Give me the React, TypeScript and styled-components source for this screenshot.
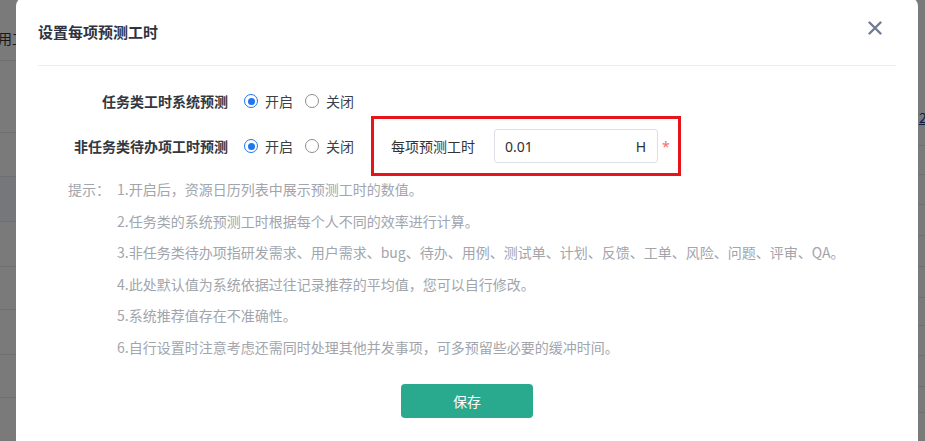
import React from "react";
import styled, { createGlobalStyle } from "styled-components";

const GlobalStyle = createGlobalStyle`
  html, body {
    margin: 0;
    padding: 0;
  }
  body {
    width: 925px;
    height: 441px;
    overflow: hidden;
    font-family: "Noto Sans", "Noto Sans CJK SC", sans-serif;
    font-size: 14px;
    color: #333;
  }
`;

/* page behind the dialog */
const Page = styled.div`
  display: flex;
  justify-content: space-between;
  height: 441px;
  background: #fff;
`;

const SideTable = styled.div<{ $width: number }>`
  display: flex;
  flex-direction: column;
  width: ${(p) => p.$width}px;
  overflow: hidden;
`;

const SideRow = styled.div<{ $height: number; $tint?: boolean }>`
  box-sizing: border-box;
  height: ${(p) => p.$height}px;
  flex-shrink: 0;
  border-bottom: 1px solid #e6e8eb;
  background: ${(p) => (p.$tint ? "#f4f8fe" : "transparent")};
  font-family: "Noto Sans CJK SC", sans-serif;
  font-size: 14px;
  color: #333;
  white-space: nowrap;
`;

const SideText = styled.div`
  margin: 29px 0 0 -2px;
  line-height: 18px;
`;

const LinkText = styled.div`
  margin: 108px 0 0 1px;
  line-height: 18px;
  color: #1d3a8a;
  text-decoration: underline;
`;

/* dialog */
const Mask = styled.div`
  position: fixed;
  inset: 0;
  background: rgba(0, 0, 0, 0.52);
  display: flex;
  align-items: flex-start;
`;

const Dialog = styled.div`
  box-sizing: border-box;
  width: 902px;
  margin: -2px 0 0 16px;
  padding: 0 22px 40px;
  background: #fff;
  border-radius: 8px;
`;

const Header = styled.div`
  box-sizing: border-box;
  display: flex;
  justify-content: space-between;
  height: 68px;
  border-bottom: 1px solid #ebedf0;
`;

const Title = styled.div`
  line-height: 67px;
  font-family: "Noto Sans CJK SC", sans-serif;
  font-size: 15px;
  font-weight: 600;
  color: #2f3340;
`;

const CloseButton = styled.div`
  width: 14px;
  height: 14px;
  margin: 22px 14px 0 0;
  cursor: pointer;
`;

const Body = styled.div`
  padding-top: 20px;
`;

const FormRow = styled.div<{ $height: number }>`
  display: flex;
  align-items: center;
  height: ${(p) => p.$height}px;
`;

const RowLabel = styled.div`
  width: 190px;
  margin-right: 16px;
  text-align: right;
  font-family: "Noto Sans CJK SC", sans-serif;
  font-weight: 600;
  color: #333840;
`;

const RadioGroup = styled.div`
  display: flex;
  align-items: center;
  gap: 12px;
`;

const RadioOption = styled.label`
  display: flex;
  align-items: center;
  gap: 7px;
  color: #3c3f45;
  font-family: "Noto Sans CJK SC", sans-serif;
  cursor: pointer;
`;

const RadioCircle = styled.span<{ $checked: boolean }>`
  box-sizing: border-box;
  display: flex;
  align-items: center;
  justify-content: center;
  width: 14px;
  height: 14px;
  border-radius: 50%;
  border: ${(p) => (p.$checked ? "1.5px solid #1f75f2" : "1px solid #8c8f94")};
  &::after {
    content: "";
    display: ${(p) => (p.$checked ? "block" : "none")};
    width: 7px;
    height: 7px;
    border-radius: 50%;
    background: #1f75f2;
  }
`;

const HighlightBox = styled.div`
  box-sizing: border-box;
  display: flex;
  align-items: center;
  flex-shrink: 0;
  width: 310px;
  height: 60px;
  margin-left: 17px;
  padding: 0 10px 0 17px;
  border: 3px solid #e8141c;
`;

const FieldLabel = styled.div`
  flex-shrink: 0;
  margin-right: 19px;
  white-space: nowrap;
  font-family: "Noto Sans CJK SC", sans-serif;
  color: #333;
`;

const InputBox = styled.div`
  box-sizing: border-box;
  display: flex;
  align-items: center;
  justify-content: space-between;
  flex-shrink: 0;
  width: 164px;
  height: 34px;
  padding: 0 11px 0 10px;
  border: 1px solid #dcdfe6;
  border-radius: 3px;
  color: #303133;
`;

const Required = styled.span`
  margin-left: 4px;
  color: #f56c6c;
  font-size: 14px;
`;

const Hints = styled.div`
  display: flex;
  padding-left: 30px;
  font-family: "Noto Sans CJK SC", sans-serif;
  color: #a2a5ac;
`;

const HintLabel = styled.div`
  width: 49px;
  line-height: 26px;
`;

const HintList = styled.div`
  display: flex;
  flex-direction: column;
  gap: 5.6px;
`;

const HintLine = styled.div`
  line-height: 26px;
  white-space: nowrap;
`;

const Footer = styled.div`
  display: flex;
  justify-content: center;
  margin-top: 24px;
`;

const SaveButton = styled.button`
  width: 132px;
  height: 34px;
  border: none;
  border-radius: 4px;
  background: #29a98e;
  color: #fff;
  font-family: "Noto Sans CJK SC", sans-serif;
  font-size: 14px;
  cursor: pointer;
`;

const leftRows = [61, 72, 44, 45, 45, 43, 45, 43, 50];
const rightRows = [146, 29, 30, 31, 31, 31, 28, 30, 31, 26, 30];

const hints = [
  "1.开启后，资源日历列表中展示预测工时的数值。",
  "2.任务类的系统预测工时根据每个人不同的效率进行计算。",
  "3.非任务类待办项指研发需求、用户需求、bug、待办、用例、测试单、计划、反馈、工单、风险、问题、评审、QA。",
  "4.此处默认值为系统依据过往记录推荐的平均值，您可以自行修改。",
  "5.系统推荐值存在不准确性。",
  "6.自行设置时注意考虑还需同时处理其他并发事项，可多预留些必要的缓冲时间。",
];

const Radio: React.FC<{ label: string; checked: boolean }> = ({ label, checked }) => (
  <RadioOption>
    <RadioCircle $checked={checked} />
    {label}
  </RadioOption>
);

const App: React.FC = () => {
  return (
    <>
      <GlobalStyle />
      <Page>
        <SideTable $width={16}>
          {leftRows.map((h, i) => (
            <SideRow key={i} $height={h} $tint={i === 3}>
              {i === 0 && <SideText>用工</SideText>}
            </SideRow>
          ))}
        </SideTable>
        <SideTable $width={7}>
          {rightRows.map((h, i) => (
            <SideRow key={i} $height={h}>
              {i === 0 && <LinkText>2</LinkText>}
            </SideRow>
          ))}
        </SideTable>
      </Page>
      <Mask>
        <Dialog>
          <Header>
            <Title>设置每项预测工时</Title>
            <CloseButton>
              <svg width="14" height="14" viewBox="0 0 14 14">
                <path
                  d="M1.5 1.5 L12.5 12.5 M12.5 1.5 L1.5 12.5"
                  stroke="#6f7c93"
                  strokeWidth="2.4"
                  strokeLinecap="round"
                />
              </svg>
            </CloseButton>
          </Header>
          <Body>
            <FormRow $height={30}>
              <RowLabel>任务类工时系统预测</RowLabel>
              <RadioGroup>
                <Radio label="开启" checked />
                <Radio label="关闭" checked={false} />
              </RadioGroup>
            </FormRow>
            <FormRow $height={60}>
              <RowLabel>非任务类待办项工时预测</RowLabel>
              <RadioGroup>
                <Radio label="开启" checked />
                <Radio label="关闭" checked={false} />
              </RadioGroup>
              <HighlightBox>
                <FieldLabel>每项预测工时</FieldLabel>
                <InputBox>
                  <span>0.01</span>
                  <span>H</span>
                </InputBox>
                <Required>*</Required>
              </HighlightBox>
            </FormRow>
            <Hints>
              <HintLabel>提示：</HintLabel>
              <HintList>
                {hints.map((h) => (
                  <HintLine key={h}>{h}</HintLine>
                ))}
              </HintList>
            </Hints>
            <Footer>
              <SaveButton>保存</SaveButton>
            </Footer>
          </Body>
        </Dialog>
      </Mask>
    </>
  );
};

export default App;
